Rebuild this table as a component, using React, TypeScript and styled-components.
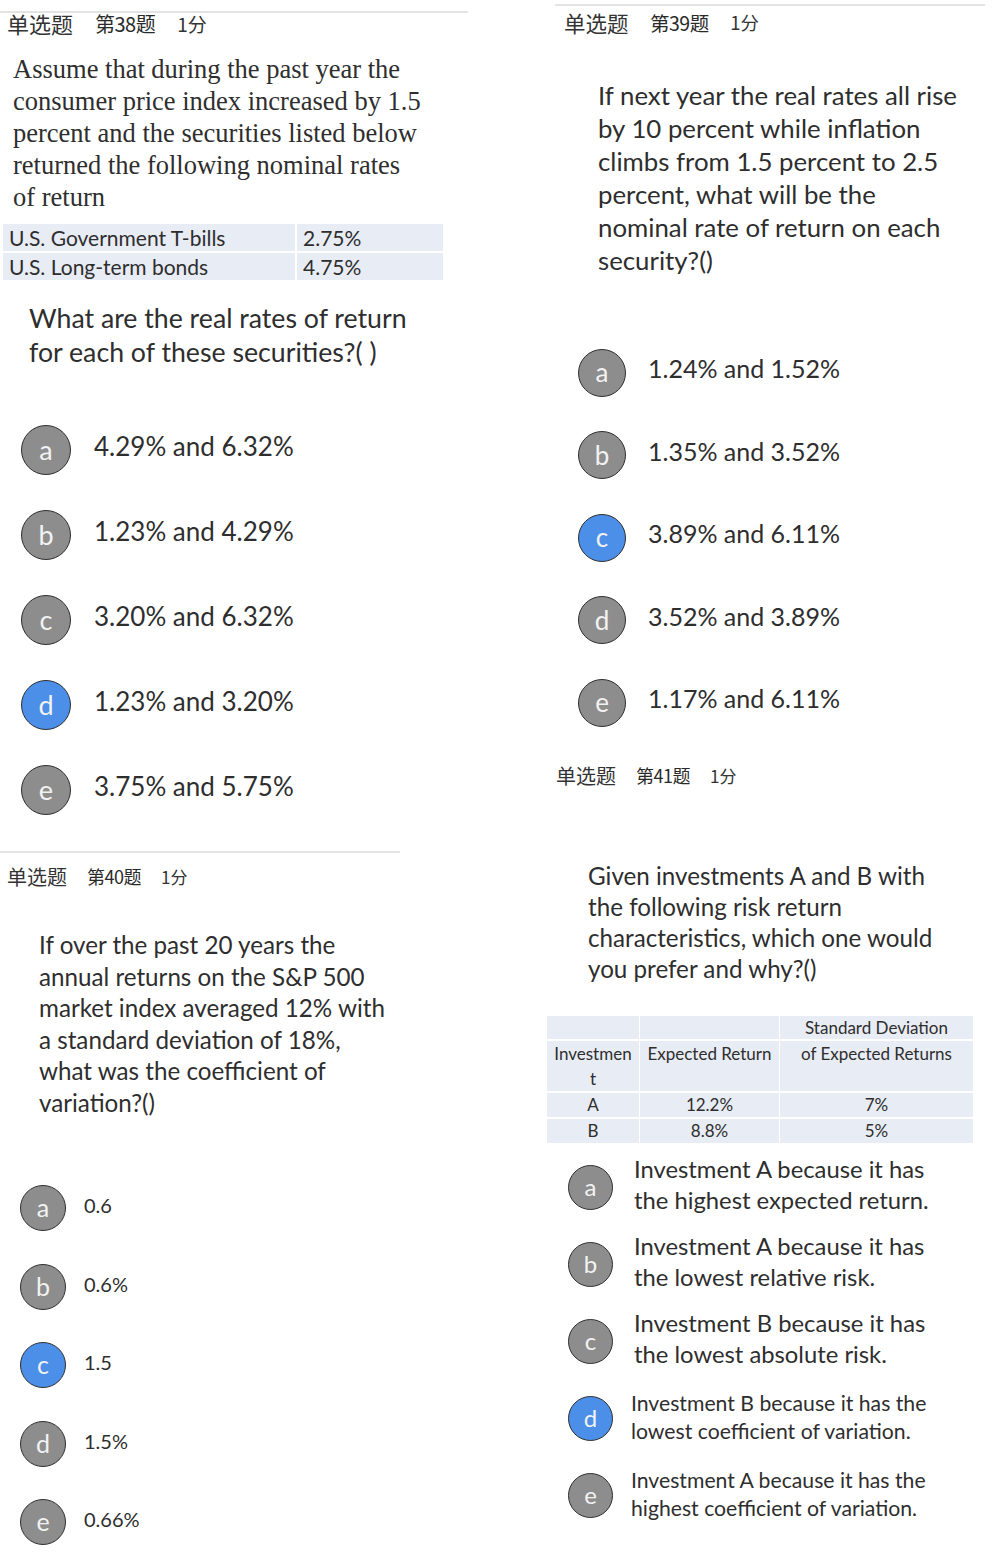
import React from "react";
import styled, { createGlobalStyle } from "styled-components";

const GlobalStyle = createGlobalStyle`
  html, body {
    margin: 0;
    padding: 0;
    background: #ffffff;
  }
  body {
    font-family: Lato, "Noto Sans", "Noto Sans CJK SC", sans-serif;
    color: #2e2e2e;
  }
`;

const Page = styled.div`
  width: 992px;
  height: 1553px;
  display: grid;
  grid-template-columns: 547px 445px;
  overflow: hidden;
  background: #ffffff;
`;

const Column = styled.div`
  display: flex;
  flex-direction: column;
`;

const Divider = styled.div<{ $top: number; $left: number; $width: number }>`
  margin-top: ${(p) => p.$top}px;
  margin-left: ${(p) => p.$left}px;
  width: ${(p) => p.$width}px;
  height: 2px;
  background: #e3e3e3;
`;

const Header = styled.div<{ $top: number; $left: number; $size: number }>`
  margin-top: ${(p) => p.$top}px;
  padding-left: ${(p) => p.$left}px;
  height: 20px;
  display: flex;
  align-items: center;
  gap: ${(p) => p.$size}px;
  font-family: "Noto Sans CJK SC", sans-serif;
  color: #333333;
  white-space: nowrap;
`;

const QType = styled.span<{ $size: number }>`
  font-size: ${(p) => p.$size}px;
`;

const QNum = styled.span<{ $size: number }>`
  font-size: ${(p) => p.$size - 2}px;
  letter-spacing: -0.5px;
  color: #2a2a2a;
`;

const QScore = styled.span<{ $size: number }>`
  font-size: ${(p) => p.$size - 3}px;
`;

const Prompt = styled.p<{
  $top: number;
  $left: number;
  $size: number;
  $lh: number;
  $width: number;
  $serif?: boolean;
}>`
  margin: ${(p) => p.$top}px 0 0 ${(p) => p.$left}px;
  width: ${(p) => p.$width}px;
  font-family: ${(p) =>
    p.$serif ? '"Liberation Serif", serif' : 'Lato, "Noto Sans", sans-serif'};
  font-size: ${(p) => p.$size}px;
  line-height: ${(p) => p.$lh}px;
  color: #2e2e2e;
`;

const Line = styled.span`
  display: block;
  white-space: nowrap;
`;

const RateTable = styled.div`
  margin: 11px 0 0 3px;
  width: 440px;
  display: grid;
  grid-template-columns: 292px 1fr;
  grid-auto-rows: 27px;
  gap: 2px;
`;

const RateCell = styled.div`
  background: #e8ecf4;
  padding-left: 6px;
  display: flex;
  align-items: center;
  font-size: 21px;
  color: #2e2e2e;
`;

const InvestTable = styled.div`
  margin: 32px 0 0 0;
  width: 426px;
  display: grid;
  grid-template-columns: 92px 139px 1fr;
  grid-template-rows: 23px 50px 24px 24px;
  gap: 2px 1px;
  font-size: 17px;
  color: #2e2e2e;
`;

const InvestCell = styled.div<{ $align?: string }>`
  background: #e8ecf4;
  display: flex;
  flex-direction: column;
  justify-content: ${(p) => p.$align ?? "center"};
  align-items: center;
  line-height: 25px;
  text-align: center;
  white-space: nowrap;
`;

const OptionList = styled.div<{ $top: number; $left: number }>`
  margin-top: ${(p) => p.$top}px;
  padding-left: ${(p) => p.$left}px;
  display: flex;
  flex-direction: column;
`;

const OptionRow = styled.div<{ $height: number; $gap: number }>`
  height: ${(p) => p.$height}px;
  display: flex;
  align-items: center;
  gap: ${(p) => p.$gap}px;
`;

const Badge = styled.div<{ $size: number; $selected?: boolean }>`
  flex: none;
  width: ${(p) => p.$size}px;
  height: ${(p) => p.$size}px;
  box-sizing: border-box;
  border-radius: 50%;
  border: 1.5px solid #2f2f2f;
  background: ${(p) => (p.$selected ? "#4b8fe9" : "#8d8d8d")};
  color: #f2f2f2;
  display: flex;
  align-items: center;
  justify-content: center;
  font-size: ${(p) => Math.round(p.$size * 0.54)}px;
  line-height: 1;
  padding-bottom: 1px;
`;

const OptionText = styled.div<{ $size: number; $lh?: number; $shift?: number }>`
  font-size: ${(p) => p.$size}px;
  line-height: ${(p) => p.$lh ?? p.$size + 6}px;
  color: #2e2e2e;
  margin-bottom: ${(p) => p.$shift ?? 0}px;
  white-space: nowrap;
`;

type Opt = { key: string; lines: string[]; selected?: boolean };

const q38: Opt[] = [
  { key: "a", lines: ["4.29% and 6.32%"] },
  { key: "b", lines: ["1.23% and 4.29%"] },
  { key: "c", lines: ["3.20% and 6.32%"] },
  { key: "d", lines: ["1.23% and 3.20%"], selected: true },
  { key: "e", lines: ["3.75% and 5.75%"] },
];

const q39: Opt[] = [
  { key: "a", lines: ["1.24% and 1.52%"] },
  { key: "b", lines: ["1.35% and 3.52%"] },
  { key: "c", lines: ["3.89% and 6.11%"], selected: true },
  { key: "d", lines: ["3.52% and 3.89%"] },
  { key: "e", lines: ["1.17% and 6.11%"] },
];

const q40: Opt[] = [
  { key: "a", lines: ["0.6"] },
  { key: "b", lines: ["0.6%"] },
  { key: "c", lines: ["1.5"], selected: true },
  { key: "d", lines: ["1.5%"] },
  { key: "e", lines: ["0.66%"] },
];

const q41: Opt[] = [
  { key: "a", lines: ["Investment A because it has", "the highest expected return."] },
  { key: "b", lines: ["Investment A because it has", "the lowest relative risk."] },
  { key: "c", lines: ["Investment B because it has", "the lowest absolute risk."] },
  {
    key: "d",
    lines: ["Investment B because it has the", "lowest coefficient of variation."],
    selected: true,
  },
  { key: "e", lines: ["Investment A because it has the", "highest coefficient of variation."] },
];

type ListProps = {
  items: Opt[];
  top: number;
  left: number;
  rowHeight: number;
  badge: number;
  gap: number;
  textSize: number;
  lh?: number;
  shift?: number;
};

const Options: React.FC<ListProps> = ({ items, top, left, rowHeight, badge, gap, textSize, lh, shift }) => (
  <OptionList $top={top} $left={left}>
    {items.map((o) => (
      <OptionRow key={o.key} $height={rowHeight} $gap={gap}>
        <Badge $size={badge} $selected={o.selected}>
          {o.key}
        </Badge>
        <OptionText $size={textSize} $lh={lh} $shift={shift}>
          {o.lines.map((l) => (
            <Line key={l}>{l}</Line>
          ))}
        </OptionText>
      </OptionRow>
    ))}
  </OptionList>
);

const QHeader: React.FC<{ top: number; left: number; size: number; num: number }> = ({ top, left, size, num }) => (
  <Header $top={top} $left={left} $size={size}>
    <QType $size={size}>单选题</QType>
    <QNum $size={size}>第{num}题</QNum>
    <QScore $size={size}>1分</QScore>
  </Header>
);

export default function App() {
  return (
    <>
      <GlobalStyle />
      <Page>
        <Column>
          <Divider $top={11} $left={0} $width={468} />
          <QHeader top={0} left={7} size={22} num={38} />
          <Prompt $serif $top={20} $left={13} $size={26.5} $lh={32} $width={440}>
            <Line>Assume that during the past year the</Line>
            <Line>consumer price index increased by 1.5</Line>
            <Line>percent and the securities listed below</Line>
            <Line>returned the following nominal rates</Line>
            <Line>of return</Line>
          </Prompt>
          <RateTable>
            <RateCell>U.S. Government T-bills</RateCell>
            <RateCell>2.75%</RateCell>
            <RateCell>U.S. Long-term bonds</RateCell>
            <RateCell>4.75%</RateCell>
          </RateTable>
          <Prompt $top={21} $left={29} $size={26.7} $lh={34} $width={430}>
            <Line>What are the real rates of return</Line>
            <Line>for each of these securities?( )</Line>
          </Prompt>
          <Options items={q38} top={38} left={21} rowHeight={85} badge={50} gap={23} textSize={26} shift={8} />

          <Divider $top={19} $left={0} $width={400} />
          <QHeader top={13} left={7} size={20} num={40} />
          <Prompt $top={43} $left={39} $size={24.2} $lh={31.5} $width={420}>
            <Line>If over the past 20 years the</Line>
            <Line>annual returns on the S&amp;P 500</Line>
            <Line>market index averaged 12% with</Line>
            <Line>a standard deviation of 18%,</Line>
            <Line>what was the coefficient of</Line>
            <Line>variation?()</Line>
          </Prompt>
          <Options items={q40} top={51} left={20} rowHeight={78.5} badge={46} gap={18} textSize={20} shift={6} />
        </Column>

        <Column>
          <Divider $top={4} $left={8} $width={430} />
          <QHeader top={6} left={17} size={21.5} num={39} />
          <Prompt $top={46.5} $left={51} $size={25.8} $lh={33} $width={394}>
            <Line>If next year the real rates all rise</Line>
            <Line>by 10 percent while inflation</Line>
            <Line>climbs from 1.5 percent to 2.5</Line>
            <Line>percent, what will be the</Line>
            <Line>nominal rate of return on each</Line>
            <Line>security?()</Line>
          </Prompt>
          <Options items={q39} top={55} left={31} rowHeight={82.5} badge={48} gap={22} textSize={25} shift={8} />

          <QHeader top={21} left={9} size={20} num={41} />
          <Prompt $top={74.5} $left={41} $size={24.2} $lh={31} $width={404}>
            <Line>Given investments A and B with</Line>
            <Line>the following risk return</Line>
            <Line>characteristics, which one would</Line>
            <Line>you prefer and why?()</Line>
          </Prompt>
          <InvestTable>
            <InvestCell />
            <InvestCell />
            <InvestCell>Standard Deviation</InvestCell>
            <InvestCell $align="flex-start">
              <span>Investmen</span>
              <span>t</span>
            </InvestCell>
            <InvestCell $align="flex-start">Expected Return</InvestCell>
            <InvestCell $align="flex-start">of Expected Returns</InvestCell>
            <InvestCell>A</InvestCell>
            <InvestCell>12.2%</InvestCell>
            <InvestCell>7%</InvestCell>
            <InvestCell>B</InvestCell>
            <InvestCell>8.8%</InvestCell>
            <InvestCell>5%</InvestCell>
          </InvestTable>
          <Options items={q41.slice(0, 3)} top={6.5} left={21} rowHeight={77} badge={45} gap={21} textSize={23.8} lh={31} shift={6} />
          <Options items={q41.slice(3)} top={0} left={21} rowHeight={77} badge={45} gap={18} textSize={21.2} lh={28} shift={4} />
        </Column>
      </Page>
    </>
  );
}
